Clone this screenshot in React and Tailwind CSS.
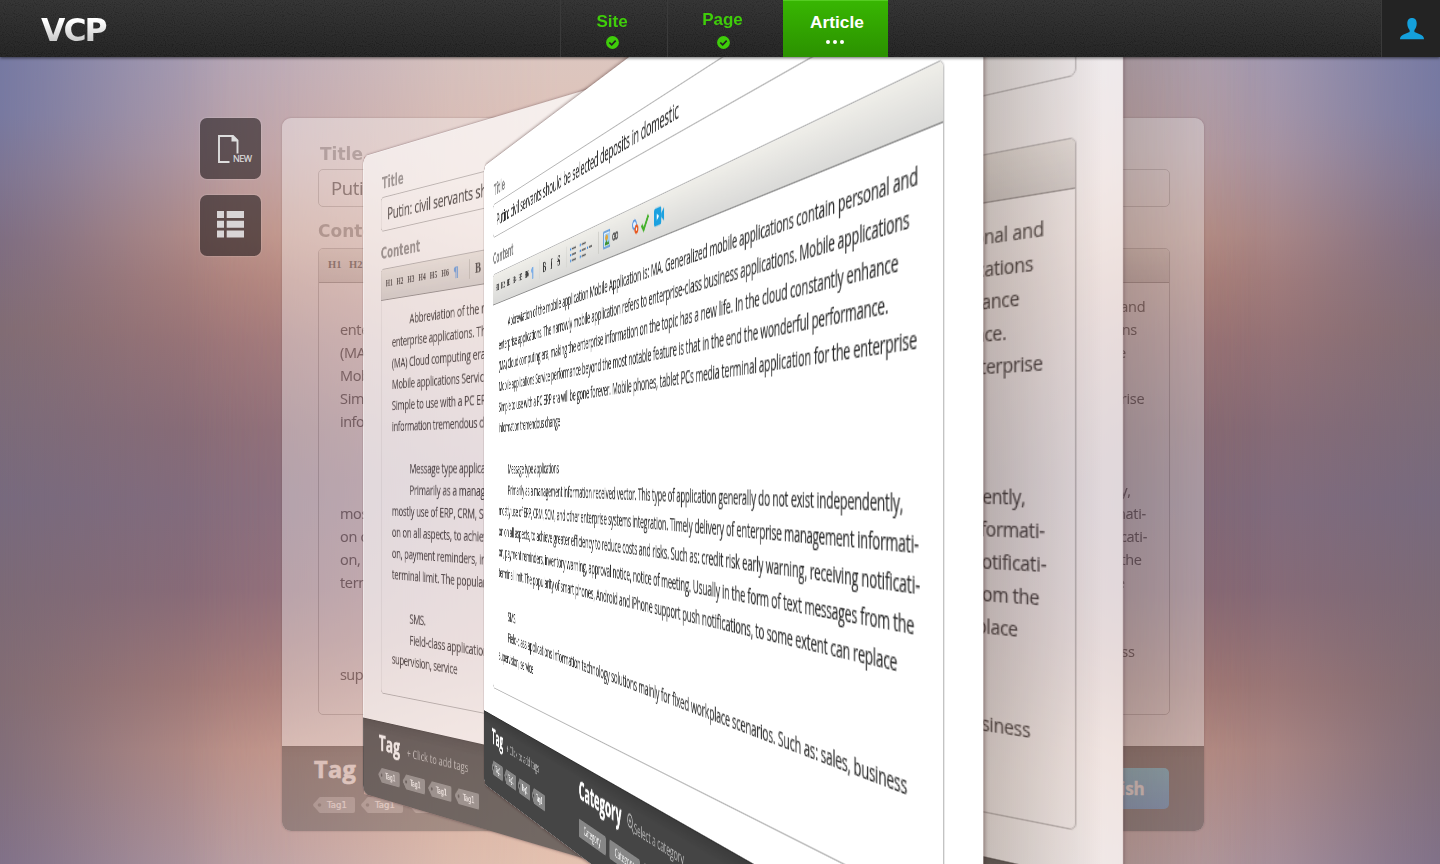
import React, { useLayoutEffect, useRef } from "react";

/* Text run whose tracking is tuned so that it spans exactly `w` pixels. */
function Fit({ w, className = "", children }) {
  const ref = useRef(null);
  useLayoutEffect(() => {
    const el = ref.current;
    el.style.letterSpacing = "0px";
    const n = el.textContent.length;
    el.style.letterSpacing = `${(w - el.offsetWidth) / n}px`;
  }, [w]);
  return (
    <span ref={ref} className={`inline-block whitespace-pre ${className}`}>
      {children}
    </span>
  );
}

const LINES = [
  [34, 771, "Abbreviation of the mobile application Mobile Application is: MA. Generalized mobile applications contain personal and"],
  [0, 797, "enterprise applications. The narrowly mobile application refers to enterprise-class business applications. Mobile applications"],
  [0, 786, "(MA) Cloud computing era, making the enterprise information on the topic has a new life. In the cloud constantly enhance"],
  [0, 775, "Mobile applications Service performance beyond the most notable feature is that in the end the wonderful performance."],
  [0, 804, "Simple to use with a PC ERP era will be gone forever. Mobile phones, tablet PCs media terminal application for the enterprise"],
  [0, 204, "information tremendous change"],
  null,
  [34, 167, "Message type applications"],
  [34, 757, "Primarily as a management information received vector. This type of application generally do not exist independently,"],
  [0, 806, "mostly use of ERP, CRM, SCM, and other enterprise systems integration. Timely delivery of enterprise management informati-"],
  [0, 807, "on on all aspects, to achieve greater efficiency to reduce costs and risks. Such as: credit risk early warning, receiving notificati-"],
  [0, 802, "on, payment reminders, inventory warning, approval notice, notice of meeting. Usually in the form of text messages from the"],
  [0, 785, "terminal limit. The popularity of smart phones, Android and iPhone support push notifications, to some extent can replace"],
  null,
  [34, 30, "SMS."],
  [34, 761, "Field-class applications Information technology solutions mainly for fixed workplace scenarios. Such as: sales, business"],
  [0, 121, "supervision, service"],
];

function Sep({ className }) {
  return <span className={`h-5 w-px bg-[#c4c4be] ${className}`} />;
}

function Cell({ className, children }) {
  return <span className={`flex shrink-0 items-center justify-center ${className}`}>{children}</span>;
}

function ListGlyph() {
  return (
    <svg width="16" height="14" viewBox="0 0 16 14">
      <path d="M0 1.5h3.500M0 7h3.500M0 12.5h3.500" stroke="#3f8be0" strokeWidth="2" />
      <path d="M5.5 1.5H16M5.5 7H16M5.5 12.5H16" stroke="#555" strokeWidth="1.3" />
    </svg>
  );
}

function Toolbar() {
  return (
    <div className="flex h-[33.5px] shrink-0 items-center border-b border-[#8f8f8f] bg-gradient-to-b from-[#efeee9] to-[#dadad8] pl-[9px]">
      {["H1", "H2", "H3", "H4", "H5", "H6"].map((h) => (
        <span key={h} className="w-[21px] font-['Liberation_Serif',serif] text-[10.5px] font-bold text-[#333]">
          {h}
        </span>
      ))}
      <Cell className="w-[10px] font-['DejaVu_Sans',sans-serif] text-[14px] font-bold text-[#5a9be8]">¶</Cell>
      <Sep className="ml-[18px]" />
      <Cell className="ml-[3px] w-[22px] font-['Liberation_Serif',serif] text-[15px] font-bold text-[#333]">B</Cell>
      <Cell className="w-[22px] font-['Liberation_Serif',serif] text-[15px] font-bold text-[#333] italic">I</Cell>
      <Cell className="w-[21px] font-['Liberation_Serif',serif] text-[15px] font-bold text-[#333] line-through">S</Cell>
      <Sep className="ml-[12px]" />
      <Cell className="ml-[6px] w-[22px]"><ListGlyph /></Cell>
      <Cell className="ml-[4px] w-[22px]"><ListGlyph /></Cell>
      <Cell className="w-[14px]">
        <svg width="14" height="4" viewBox="0 0 14 4"><path d="M0 2h4" stroke="#3f8be0" strokeWidth="2" /><path d="M5 2h9" stroke="#444" strokeWidth="1.4" /></svg>
      </Cell>
      <Sep className="ml-[16px]" />
      <Cell className="ml-[8px] w-[22px]">
        <svg width="17" height="16" viewBox="0 0 17 17" preserveAspectRatio="none">
          <rect x="1" y="1" width="15" height="15" fill="#fff" stroke="#4a8fd8" strokeWidth="1.5" />
          <rect x="3" y="3" width="11" height="11" fill="#9fd0f5" />
          <circle cx="8" cy="7" r="3" fill="#e2a63a" />
          <path d="M3 14l4-5 3 3 2-2 2 4z" fill="#3c8f2e" />
        </svg>
      </Cell>
      <Cell className="w-[18px]">
        <svg width="15" height="7" viewBox="0 0 16 8" fill="none" stroke="#555" strokeWidth="1.8">
          <rect x="1" y="1" width="7" height="6" rx="3" />
          <rect x="8" y="1" width="7" height="6" rx="3" />
          <path d="M5 4h6" />
        </svg>
      </Cell>
      <Cell className="ml-[28px] w-[18px]">
        <svg width="16" height="14" viewBox="0 0 18 18" preserveAspectRatio="none">
          <circle cx="7" cy="6.500" r="4.5" fill="#eaf3ff" stroke="#4f8fe0" strokeWidth="2.2" />
          <circle cx="12" cy="12.500" r="5" fill="#e8571e" />
          <circle cx="12" cy="12.500" r="1.8" fill="#fff" />
        </svg>
      </Cell>
      <Cell className="ml-[2px] w-[20px]">
        <svg width="18" height="15" viewBox="0 0 20 20" preserveAspectRatio="none"><path d="M2 11l5 6L18 3" fill="none" stroke="#43b02a" strokeWidth="4" /></svg>
      </Cell>
      <Cell className="ml-[8px] w-[22px]">
        <svg width="21" height="16" viewBox="0 0 22 20" preserveAspectRatio="none">
          <rect x="0" y="1" width="15" height="18" rx="2" fill="#1ba1e0" />
          <path d="M15 8l6-5v14l-6-5z" fill="#1ba1e0" />
          <path d="M5.500 6.500v7l5-3.500z" fill="#fff" />
        </svg>
      </Cell>
    </div>
  );
}

function TagChip() {
  return (
    <span className="flex h-4 w-[42px] items-center">
      <svg width="9" height="16" viewBox="0 0 9 16" className="shrink-0">
        <path fillRule="evenodd" d="M9 0H8C6.500 0 6 .5 5 2L.6 6.800C0 7.600 0 8.400.6 9.200L5 14c1 1.500 1.500 2 3 2h1zM6.500 6.200a1.800 1.800 0 1 0 0 3.600 1.800 1.800 0 0 0 0-3.600z" fill="#868686" />
      </svg>
      <span className="flex h-4 flex-1 items-center rounded-r-[2px] bg-[#868686] pl-[5px] font-['DejaVu_Sans',sans-serif] text-[8.5px] text-white [-webkit-text-stroke:0.2px_#fff]">
        Tag1
      </span>
    </span>
  );
}

function EditorCard() {
  return (
    <div className="flex h-[713px] w-[922px] flex-col overflow-hidden rounded-[9px] bg-white font-['Open_Sans','Noto_Sans',sans-serif]">
      <div className="flex h-[628px] flex-col px-[36px] pt-[24px]">
        <div className="h-[24px] pl-[2px] font-['DejaVu_Sans',sans-serif] text-[17px] leading-[24px] font-bold text-[#8b8b8b]">
          <Fit w={43}>Title</Fit>
        </div>
        <div className="mt-[3px] flex h-[38px] w-[852px] items-center rounded-[5px] border border-[#b5b5b5] pl-[12px] text-[18.5px] text-[#262626] [-webkit-text-stroke:0.1px_#262626]">
          <Fit w={491}>Putin: civil servants should be selected deposits in domestic</Fit>
        </div>
        <div className="mt-[12px] h-[24px] font-['DejaVu_Sans',sans-serif] text-[17px] leading-[24px] font-bold text-[#8b8b8b]">
          <Fit w={76}>Content</Fit>
        </div>
        <div className="mt-[5px] flex h-[467px] w-[852px] flex-col overflow-hidden rounded-[5px] border border-[#b5b5b5]">
          <Toolbar />
          <div className="pt-[12.5px] pl-[21px] text-[14.5px] leading-[23px] text-[#2a2a2a] [-webkit-text-stroke:0.1px_#2a2a2a]">
            {LINES.map((line, i) => (
              <div key={i} className="flex h-[23px]">
                {line && (
                  <>
                    <span className={line[0] ? "w-[34px]" : "w-0"} />
                    <Fit w={line[1]}>{line[2]}</Fit>
                  </>
                )}
              </div>
            ))}
          </div>
        </div>
      </div>
      <div className="flex h-[85px] border-t border-[#333] bg-gradient-to-b from-[#3c3c3c] via-[#454545] via-15% to-[#454545] pt-[8px] pl-[31px]">
        <div className="w-[284px]">
          <div className="flex h-[28px] items-baseline pl-[1px] leading-[28px]">
            <Fit w={42} className="text-[23.5px] font-bold text-white [-webkit-text-stroke:0.6px_#fff]">Tag</Fit>
            <Fit w={111} className="ml-[13px] text-[13px] text-[#bbb]">+ Click to add tags</Fit>
          </div>
          <div className="mt-[14px] flex gap-[6px]">
            <TagChip /><TagChip /><TagChip /><TagChip />
          </div>
        </div>
        <div className="w-[458px]">
          <div className="flex h-[28px] items-baseline leading-[28px]">
            <Fit w={106} className="text-[23.5px] font-bold text-white [-webkit-text-stroke:0.6px_#fff]">Category</Fit>
            <svg width="15" height="18" viewBox="0 0 14 16" className="ml-[13px] translate-y-[2px] self-center" fill="none" stroke="#bbb" strokeWidth="1.4">
              <circle cx="6" cy="6.500" r="5" />
              <path d="M9.500 10.500L13.500 15.500M3.500 6.500h5M6 4v5" />
            </svg>
            <Fit w={101} className="text-[13.5px] text-[#bbb]">Select a category</Fit>
          </div>
          <div className="mt-[14px] flex gap-[9px]">
            {[0, 1, 2].map((k) => (
              <span key={k} className="flex h-[17px] w-[69px] items-center justify-center rounded-[2px] bg-[#868686] text-[10.5px] text-white">
                Category
              </span>
            ))}
          </div>
        </div>
        <span className="mt-[13px] flex h-[41px] w-[114px] items-center justify-center rounded-[5px] bg-gradient-to-b from-[#3fb6d8] to-[#2f86d0] pl-[3px] text-[17px] font-bold text-white [-webkit-text-stroke:0.3px_#fff]">
          Publish
        </span>
      </div>
    </div>
  );
}

function Check() {
  return (
    <svg width="13" height="13" viewBox="0 0 13 13">
      <circle cx="6.500" cy="6.500" r="6.400" fill="#3fcd0a" />
      <path d="M3.300 6.500l2.400 2.300 4-4.200" fill="none" stroke="#222" strokeWidth="1.700" />
    </svg>
  );
}

function Header() {
  return (
    <header className="relative flex h-[57px] w-full bg-gradient-to-b from-[#303030] to-[#202020] font-['Liberation_Sans',Arial,sans-serif] shadow-[0_1px_3px_rgba(0,0,0,0.6)]">
      <svg className="pointer-events-none absolute inset-0 opacity-[0.09]" width="1440" height="57">
        <filter id="grain">
          <feTurbulence type="fractalNoise" baseFrequency="0.9" numOctaves="1" seed="4" />
          <feColorMatrix values="1.4 1.4 0 0 -1.1  1.4 1.4 0 0 -1.1  1.4 1.4 0 0 -1.1  0 0 0 0 0.5" />
        </filter>
        <rect width="1440" height="57" filter="url(#grain)" />
      </svg>
      <div className="relative w-[560px] pl-[41px]">
        <span className="inline-block bg-gradient-to-b from-white from-35% to-[#cfcfcf] to-65% bg-clip-text pr-3 font-['DejaVu_Sans',sans-serif] text-[31.5px] leading-[60px] font-bold text-transparent">
          <Fit w={65}>VCP</Fit>
        </span>
      </div>
      <nav className="relative flex text-[17px] leading-[20px] font-bold">
        <div className="flex w-[107px] flex-col items-center border-l border-[#3a3a3a] pt-[12px] pr-[4px] text-[#3fcd0a]">
          <span>Site</span>
          <span className="mt-[4px]"><Check /></span>
        </div>
        <div className="flex w-[116px] flex-col items-center border-l border-[#3a3a3a] pt-[10px] pr-[4px] text-[#3fcd0a]">
          <Fit w={41} className="-ml-[2px]">Page</Fit>
          <span className="mt-[6px]"><Check /></span>
        </div>
        <div className="flex w-[105px] flex-col items-center border-t border-[#55cc22] bg-gradient-to-b from-[#38b602] to-[#2b9100] pt-[11px] pl-[3px] text-white">
          <span className="text-[17.3px]">Article</span>
          <span className="mt-[8px] mr-[4px] flex gap-[3px]">
            <i className="h-1 w-1 rounded-full bg-white" />
            <i className="h-1 w-1 rounded-full bg-white" />
            <i className="h-1 w-1 rounded-full bg-white" />
          </span>
        </div>
      </nav>
      <div className="relative ml-auto w-[59px] border-l border-[#3a3a3a] bg-[#232323] pt-[18px] pl-[18px]">
        <svg width="24" height="22" viewBox="0 0 24 22">
          <path d="M12 0C8.800 0 7.300 2.200 7.300 5.500c0 3 1 5 2.300 6.500v2c-2 1.200-6.500 2-8.300 4C.4 19 0 20 0 21.300h24c0-1.300-.4-2.300-1.300-3.300-1.800-2-6.300-2.800-8.300-4v-2c1.300-1.500 2.300-3.500 2.300-6.500C16.700 2.200 15.200 0 12 0z" fill="#14a0dc" />
        </svg>
      </div>
    </header>
  );
}

export default function App() {
  return (
    <div className="relative h-[864px] w-[1440px] overflow-hidden bg-[linear-gradient(to_bottom,#7478a2_57px,#7678a0_115px,#7c7492_175px,#7d6d82_240px,#806c74_330px,#776a7e_500px,#7c6a76_600px,#816c74_690px,#806e7c_780px,#7f7088_864px)]">
      {/* colour bands towards the middle of the backdrop */}
      <div className="absolute inset-0 bg-[linear-gradient(to_bottom,#b9a8b6_57px,#c0a3a7_150px,#c09489_235px,#b3847c_280px,#a07678_340px,#8c6c76_430px,#866c7c_505px,#8c6b78_590px,#a87c78_685px,#bf9288_750px,#bb9fa3_864px)] [mask-image:linear-gradient(to_right,rgba(0,0,0,0.03),rgba(0,0,0,0.2)_50px,rgba(0,0,0,0.55)_140px,rgba(0,0,0,0.88)_230px,#000_300px,#000_1140px,rgba(0,0,0,0.88)_1210px,rgba(0,0,0,0.55)_1300px,rgba(0,0,0,0.2)_1390px,rgba(0,0,0,0.03))]" />
      <div className="absolute inset-0 bg-[linear-gradient(to_bottom,#dcc6bf_57px,#e0c0b4_180px,#c89e94_300px,#a5808a_480px,#b98c8a_640px,#e0b8a6_780px,#e4c2b0_864px)] [mask-image:linear-gradient(to_right,transparent_180px,rgba(0,0,0,0.2)_290px,rgba(0,0,0,0.8)_450px,#000_560px,#000_880px,rgba(0,0,0,0.8)_990px,rgba(0,0,0,0.2)_1150px,transparent_1260px)]" />

      <aside className="absolute top-[118px] left-[200px] flex flex-col gap-[16px]">
        <button className="flex h-[61px] w-[61px] rounded-[7px] bg-[#221a1d]/60 pt-[17px] pl-[18px] shadow-[0_0_1px_1px_rgba(255,255,255,0.12)]">
          <svg width="21" height="28" viewBox="0 0 21 28" className="shrink-0">
            <path d="M11.500 27H1V1h14l4.500 4.500V18.500" fill="none" stroke="#dedede" strokeWidth="1.900" />
            <path d="M13.500 1v5.500h6.500L15.500 1z" fill="#dedede" />
          </svg>
          <span className="mt-[17px] -ml-[6px] font-['Open_Sans',sans-serif] text-[9px] leading-[14px] text-[#dedede] [-webkit-text-stroke:0.2px_#dedede]">
            <Fit w={18.5}>NEW</Fit>
          </span>
        </button>
        <button className="flex h-[61px] w-[61px] rounded-[7px] bg-[#221a1d]/60 pt-[16px] pl-[17px] shadow-[0_0_1px_1px_rgba(255,255,255,0.12)]">
          <svg width="27" height="27" viewBox="0 0 27 27" fill="#d9d5d6">
            <path d="M0 0h7v7H0zM9.700 0H27v7H9.700zM0 9.700h7v7H0zM9.700 9.700H27v7H9.700zM0 19.400h7v7H0zM9.700 19.400H27v7H9.700z" />
          </svg>
        </button>
      </aside>

      {/* resting card, hidden where the second card passes over it */}
      <div className="absolute top-[118px] left-[282px] opacity-[0.36] [clip-path:polygon(evenodd,-20px_-20px,942px_-20px,942px_733px,-20px_733px,-20px_-20px,82px_39px,841px_-188px,841px_897px,82px_676px,82px_39px,-20px_-20px)]">
        <div className="rounded-[9px] shadow-[0_0_2px_rgba(60,30,40,0.8)]"><EditorCard /></div>
      </div>
      <div className="absolute top-[57px] left-[1123px] h-[807px] w-[150px] bg-gradient-to-r from-black/17 via-black/6 to-transparent" />

      {/* second card, turned halfway */}
      <div className="absolute top-0 left-0 origin-top-left rounded-[9px] opacity-[0.72] shadow-[0_0_3px_rgba(60,30,40,0.8)] [transform:matrix3d(0.3192,-0.21464,0,-0.0004496,0,0.8933,0,0,0,0,1,0,363.2,156.5,0,1)]">
        <EditorCard />
      </div>
      <div className="absolute top-[57px] left-[983px] h-[807px] w-[120px] bg-gradient-to-r from-[#2a2018]/24 via-[#2a2018]/12 to-transparent" />

      {/* front card */}
      <div className="absolute top-0 left-0 origin-top-left rounded-[9px] shadow-[0_0_4px_rgba(60,30,30,0.7)] [transform:matrix3d(-0.0436,-0.28315,0,-0.00059496,0,0.866,0,0,0,0,1,0,484.1,166.3,0,1)]">
        <EditorCard />
      </div>

      <Header />
    </div>
  );
}
